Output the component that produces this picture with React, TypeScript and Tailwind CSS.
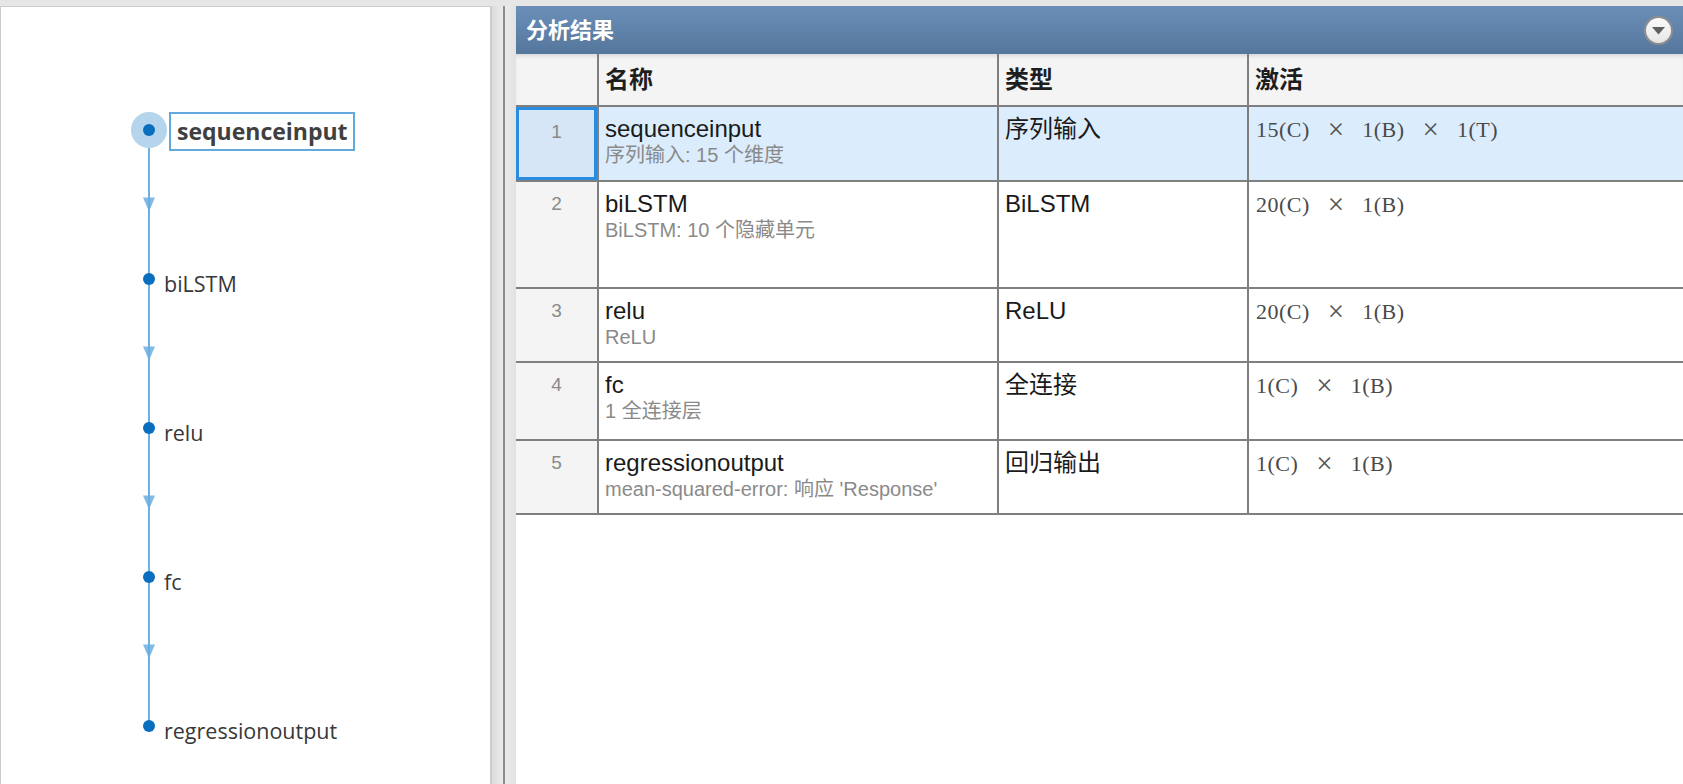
import React from 'react';

type Row = {
  idx: number;
  name: string;
  desc: string;
  type: string;
  act: string[];
  h: string;
  selected?: boolean;
};

const rows: Row[] = [
  { idx: 1, name: 'sequenceinput', desc: '序列输入: 15 个维度', type: '序列输入', act: ['15(C)', '×', '1(B)', '×', '1(T)'], h: 'h-[75px]', selected: true },
  { idx: 2, name: 'biLSTM', desc: 'BiLSTM: 10 个隐藏单元', type: 'BiLSTM', act: ['20(C)', '×', '1(B)'], h: 'h-[107px]' },
  { idx: 3, name: 'relu', desc: 'ReLU', type: 'ReLU', act: ['20(C)', '×', '1(B)'], h: 'h-[74px]' },
  { idx: 4, name: 'fc', desc: '1 全连接层', type: '全连接', act: ['1(C)', '×', '1(B)'], h: 'h-[78px]' },
  { idx: 5, name: 'regressionoutput', desc: "mean-squared-error: 响应 'Response'", type: '回归输出', act: ['1(C)', '×', '1(B)'], h: 'h-[74px]' },
];

const nodes = ['sequenceinput', 'biLSTM', 'relu', 'fc', 'regressionoutput'];
const NODE_X = 148;
const NODE_Y0 = 123;
const NODE_STEP = 149;

function LayerGraph() {
  const ys = nodes.map((_, i) => NODE_Y0 + i * NODE_STEP);
  return (
    <div className="relative h-full w-full">
      <svg className="absolute inset-0" width="490" height="778">
        <line x1={NODE_X} y1={ys[0]} x2={NODE_X} y2={ys[ys.length - 1]} stroke="#6fb0e2" strokeWidth="2" />
        {ys.slice(0, -1).map((y, i) => {
          const m = y + NODE_STEP / 2;
          return (
            <polygon
              key={i}
              points={`${NODE_X - 6},${m - 7} ${NODE_X + 6},${m - 7} ${NODE_X},${m + 7}`}
              fill="#6aaee0"
              fillOpacity="0.85"
            />
          );
        })}
        <circle cx={NODE_X} cy={ys[0]} r="18" fill="#b5d5ec" />
        {ys.map((y, i) => (
          <circle key={i} cx={NODE_X} cy={y} r="6" fill="#0a6ebf" />
        ))}
      </svg>
      {nodes.map((n, i) =>
        i === 0 ? (
          <div
            key={n}
            className="absolute left-[168px] h-[39px] border-2 border-[#62a9dd] pl-[6px] pr-[5px] text-[23px] font-bold leading-[34px] text-[#404040]"
            style={{ top: ys[i] - 18 }}
          >
            {n}
          </div>
        ) : (
          <div
            key={n}
            className="absolute left-[163px] text-[21.5px] leading-[28px] text-[#383838]"
            style={{ top: ys[i] - 9 }}
          >
            {n}
          </div>
        )
      )}
    </div>
  );
}

function DropButton() {
  return (
    <div className="flex h-[29px] w-[29px] items-center justify-center rounded-full border-2 border-[#8e8e8e] bg-gradient-to-b from-[#fbfbfb] to-[#e6e6e6]">
      <svg width="13" height="8" viewBox="0 0 13 8" className="mt-[1px]">
        <polygon points="0,0 13,0 6.5,7.5" fill="#5f5f5f" />
      </svg>
    </div>
  );
}

function ResultsTable() {
  return (
    <div className="flex flex-col">
      <div className="flex h-[53px] border-b-2 border-[#7f7f7f] bg-[#f4f4f4] text-[24px] font-bold text-[#1e1e1e] shadow-[inset_0_4px_4px_-2px_rgba(0,0,0,0.12)]">
        <div className="w-[81px]" />
        <div className="flex w-[400px] items-center border-l-2 border-[#7f7f7f] pl-[6px]">名称</div>
        <div className="flex w-[250px] items-center border-l-2 border-[#7f7f7f] pl-[6px]">类型</div>
        <div className="flex flex-1 items-center border-l-2 border-[#7f7f7f] pl-[6px]">激活</div>
      </div>
      {rows.map((r) => (
        <div
          key={r.idx}
          className={`flex ${r.h} border-b-2 border-[#7f7f7f] ${r.selected ? 'bg-[#dbedfc]' : 'bg-white'}`}
        >
          <div
            className={`w-[81px] pt-[8px] text-center text-[19px] leading-[28px] text-[#8a8a8a] ${
              r.selected ? 'border-[3px] border-[#2a8ce0] bg-[#d6e6f6] pt-[5px]' : 'bg-[#f4f4f4]'
            }`}
          >
            {r.idx}
          </div>
          <div className="w-[400px] border-l-2 border-[#7f7f7f] pl-[6px] pt-[8px]">
            <div className="text-[24px] leading-[28px] text-[#1a1a1a]">{r.name}</div>
            <div className="text-[20px] leading-[24px] text-[#8a8a8a]">{r.desc}</div>
          </div>
          <div className="w-[250px] border-l-2 border-[#7f7f7f] pl-[6px] pt-[8px] text-[24px] leading-[28px] text-[#1a1a1a]">
            {r.type}
          </div>
          <div
            className="flex-1 border-l-2 border-[#7f7f7f] pl-[7px] pt-[9px] text-[22px] leading-[27px] text-[#4a4a4a]"
            style={{ fontFamily: '"Liberation Serif", "Noto Sans CJK SC", serif' }}
          >
            <div className="flex items-center gap-[18px]">
              {r.act.map((t, i) => (
                <span key={i} className={t === '×' ? 'text-[29px] leading-[27px] text-[#555]' : 'tracking-[0.5px]'}>
                  {t}
                </span>
              ))}
            </div>
          </div>
        </div>
      ))}
    </div>
  );
}

export default function App() {
  return (
    <div
      className="flex h-[784px] w-[1683px] overflow-hidden bg-[#e6e6e6] pt-[6px]"
      style={{ fontFamily: '"Liberation Sans", "Noto Sans CJK SC", sans-serif' }}
    >
      <div
        className="h-full w-[492px] shrink-0 border-l border-t border-r-2 border-[#cdcdcd] bg-white"
        style={{ fontFamily: '"Open Sans", "Noto Sans CJK SC", sans-serif' }}
      >
        <LayerGraph />
      </div>
      <div className="flex h-full w-[24px] shrink-0 justify-center bg-gradient-to-r from-[#dcdcdc] via-[#ececec] to-[#e2e2e2]">
        <div className="h-full w-[2px] bg-[#8c8c8c]" />
      </div>
      <div className="flex h-full flex-1 flex-col bg-white">
        <div className="flex h-[48px] shrink-0 items-center justify-between bg-gradient-to-b from-[#6b8fb8] to-[#55779d] pl-[10px] pr-[10px]">
          <span className="text-[22px] font-bold text-white">分析结果</span>
          <DropButton />
        </div>
        <ResultsTable />
      </div>
    </div>
  );
}
